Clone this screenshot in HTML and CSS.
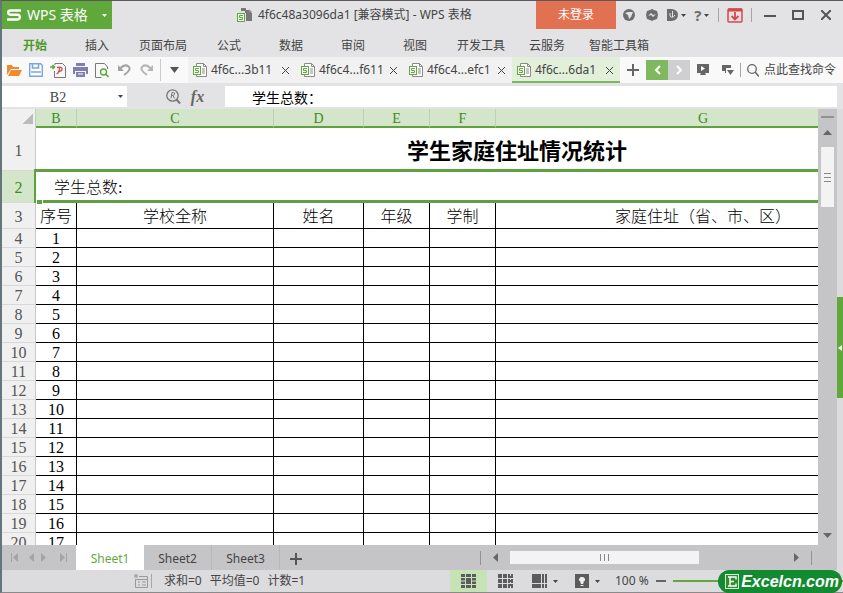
FILE: index.html
```html
<!DOCTYPE html>
<html lang="zh-CN">
<head>
    <meta charset="UTF-8">
    <title>4f6c48a3096da1 - WPS 表格</title>
    <link rel="stylesheet" href="styles.css">
</head>
<body>
<!-- 公用图标 -->
<svg class="defs">
    <symbol id="doc" viewBox="0 0 14 14">
        <path d="M3.500 3V.5h7l3 3v10h-10V11" fill="#fff" stroke="#8a8a8a"/>
        <path d="M10.500 .5v3h3M9 6h3M9 8h3M9 10h3" fill="none" stroke="#8a8a8a"/>
        <rect x=".5" y="3.500" width="7" height="8" fill="#fff" stroke="#5fa83c"/>
        <path d="M6 5.500H2.500v2h3v2H2" fill="none" stroke="#5fa83c"/>
    </symbol>
    <symbol id="close" viewBox="0 0 9 9">
        <path d="M1 1l7 7M8 1l-7 7" stroke="#444" fill="none"/>
    </symbol>
    <symbol id="caret" viewBox="0 0 5 3">
        <path d="M0 0h5L2.500 3z" fill="currentColor"/>
    </symbol>
</svg>
<div id="titlebar">
    <button class="brand">
        <svg width="14" height="12" viewBox="0 0 14 12"><path d="M14 1.500H3.500Q1.200 1.500 1.200 3.500T3.500 5.800H10.500Q12.800 5.800 12.800 8.100T10.500 10.500H0" fill="none" stroke="#fff" stroke-width="2.400"/></svg>
        <span>WPS 表格</span>
        <svg class="caret" width="5" height="3"><use href="#caret"/></svg>
    </button>
    <div class="caption">
        <svg width="15" height="14" viewBox="0 0 15 14"><path d="M4 0h5v3H4z" fill="#777"/><path d="M8 2h4l3 3v8H9V5H8z" fill="#777"/><path d="M12 1l3 3h-3z" fill="#999"/><rect x=".5" y="5.500" width="7" height="8" fill="#eef5ea" stroke="#5fa83c"/><path d="M6 7.500H2.500v2h3v2H2" fill="none" stroke="#5fa83c"/></svg>
        <span>4f6c48a3096da1 [兼容模式] - WPS 表格</span>
    </div>
    <button class="login">未登录</button>
    <div class="wintools">
        <button aria-label="皮肤"><svg width="12" height="12" viewBox="0 0 12 12"><circle cx="6" cy="6" r="6" fill="#6d6d6d"/><path d="M2 4l3-1 5 0-2 5-2 2-1-4z" fill="#e3e3e5"/></svg></button>
        <button aria-label="云同步"><svg width="12" height="12" viewBox="0 0 12 12"><path d="M6 0l2 1 3 1 1 4-1 4-3 1-2 1-2-1-3-1-1-4 1-4 3-1z" fill="#6d6d6d"/><path d="M2 7l3-3 2 2 3-1-3 3-2-2z" fill="#e3e3e5"/></svg></button>
        <button aria-label="论坛"><svg width="11" height="12" viewBox="0 0 11 12"><path d="M0 0h5q6 1 6 6t-6 6H0z" fill="#6d6d6d"/><path d="M3 4v3q2.500 3 5-1M5.500 2v6" fill="none" stroke="#e3e3e5"/></svg><svg class="caret" width="5" height="3"><use href="#caret"/></svg></button>
        <button aria-label="帮助"><b>?</b><svg class="caret" width="5" height="3"><use href="#caret"/></svg></button>
        <i class="sep"></i>
        <button class="down" aria-label="功能区"><svg width="16" height="15" viewBox="0 0 16 15"><rect x="1" y="1" width="14" height="13" rx="1" fill="#f1dede" stroke="#cf4a50" stroke-width="1.500"/><path d="M1 2h14" stroke="#cf4a50" stroke-width="3"/><path d="M8 4v7M4.500 8L8 11.500 11.500 8" fill="none" stroke="#cf4a50" stroke-width="1.800"/></svg></button>
        <i class="sep"></i>
        <button class="win" aria-label="最小化"><svg width="12" height="10"><path d="M0 6h12" stroke="#555" stroke-width="2"/></svg></button>
        <button class="win" aria-label="最大化"><svg width="12" height="10"><rect x="1" y="1" width="10" height="8" fill="none" stroke="#555" stroke-width="2"/></svg></button>
        <button class="win" aria-label="关闭"><svg width="10" height="10"><path d="M0 0l10 10M10 0L0 10" stroke="#555" stroke-width="2"/></svg></button>
    </div>
</div>

<nav id="menu">
    <a href="#" class="on">开始</a>
    <a href="#">插入</a>
    <a href="#">页面布局</a>
    <a href="#">公式</a>
    <a href="#">数据</a>
    <a href="#">审阅</a>
    <a href="#">视图</a>
    <a href="#">开发工具</a>
    <a href="#">云服务</a>
    <a href="#">智能工具箱</a>
</nav>

<div id="toolbar">
    <div class="quick">
        <button aria-label="打开"><svg width="15" height="12" viewBox="0 0 15 12"><path d="M0 11V1h5l1 2h6v2H4z" fill="#f08a2c"/><path d="M4 6h11l-3 6H1z" fill="#f08a2c"/></svg></button>
        <button aria-label="保存"><svg width="14" height="14" viewBox="0 0 14 14"><path d="M.7 .7h11l1.600 1.600v11H.7z" fill="#fff" stroke="#7aa5e3" stroke-width="1.400"/><path d="M3.500 1v4h6V1M2 9h10" fill="none" stroke="#7aa5e3" stroke-width="1.600"/></svg></button>
        <button aria-label="输出为PDF"><svg width="16" height="15" viewBox="0 0 16 15"><path d="M5 2V.5h7.500l3 3v11H4.500V8" fill="none" stroke="#777"/><path d="M0 4h4M2.500 2l2 2-2 2" fill="none" stroke="#5fa83c" stroke-width="1.600"/><path d="M7 4.500q5-1 5 1.500T8 8.500M9.500 5q0 5-3 6" fill="none" stroke="#d0494b" stroke-width="1.300"/></svg></button>
        <button aria-label="打印"><svg width="15" height="14" viewBox="0 0 15 14"><path d="M3 0h9v3H3zM0 4h15v7h-2V8H2v3H0zM3 9h9v5H3z" fill="#7e7eb5"/><path d="M5 11h5" stroke="#fff"/></svg></button>
        <button aria-label="打印预览"><svg width="14" height="15" viewBox="0 0 14 15"><path d="M12.500 6V4l-3-3.500h-9v14h6" fill="none" stroke="#777"/><circle cx="8.500" cy="9" r="3" fill="none" stroke="#5fa83c" stroke-width="1.400"/><path d="M10.500 11l3 3" stroke="#5fa83c" stroke-width="1.600"/></svg></button>
        <button aria-label="撤销"><svg width="13" height="12" viewBox="0 0 13 12"><path d="M2 4.500Q7-.5 10.500 2.500T6 11" fill="none" stroke="#a3a3a3" stroke-width="2"/><path d="M0 1v6h6z" fill="#a3a3a3"/></svg></button>
        <button aria-label="恢复"><svg width="13" height="12" viewBox="0 0 13 12"><path d="M11 4.500Q6-.5 2.500 2.500T7 11" fill="none" stroke="#b5b5b5" stroke-width="2"/><path d="M13 1v6H7z" fill="#b5b5b5"/></svg></button>
        <i class="sep"></i>
        <button class="more" aria-label="更多"><svg width="9" height="6" viewBox="0 0 9 6"><path d="M0 0h9L4.500 6z" fill="#555"/></svg></button>
    </div>
    <div class="files">
        <div class="file"><svg width="14" height="14"><use href="#doc"/></svg><span>4f6c...3b11</span><svg width="9" height="9"><use href="#close"/></svg></div>
        <div class="file"><svg width="14" height="14"><use href="#doc"/></svg><span>4f6c4...f611</span><svg width="9" height="9"><use href="#close"/></svg></div>
        <div class="file"><svg width="14" height="14"><use href="#doc"/></svg><span>4f6c4...efc1</span><svg width="9" height="9"><use href="#close"/></svg></div>
        <div class="file on"><svg width="14" height="14"><use href="#doc"/></svg><span>4f6c...6da1</span><svg width="9" height="9"><use href="#close"/></svg></div>
    </div>
    <button class="add" aria-label="新建"><svg width="12" height="12"><path d="M0 6h12M6 0v12" stroke="#666" stroke-width="2"/></svg></button>
    <button class="prev" aria-label="上一个"><svg width="7" height="10"><path d="M6 1L2 5l4 4" fill="none" stroke="#fff" stroke-width="2"/></svg></button>
    <button class="next" aria-label="下一个"><svg width="7" height="10"><path d="M1 1l4 4-4 4" fill="none" stroke="#fff" stroke-width="2"/></svg></button>
    <button class="tool" aria-label="播放"><svg width="12" height="12" viewBox="0 0 12 12"><path d="M0 0h12v9H8l1 2H3l1-2H0z" fill="#666"/><path d="M4 2l4 2.500L4 7z" fill="#fff"/></svg></button>
    <button class="tool" aria-label="选项"><svg width="12" height="12" viewBox="0 0 12 12"><path d="M0 1h9v3H4v5H3V7H0zM5 6h7L8.500 11z" fill="#666"/></svg></button>
    <i class="sep"></i>
    <button class="search"><svg width="12" height="13" viewBox="0 0 12 13"><circle cx="5" cy="5" r="4.300" fill="none" stroke="#666" stroke-width="1.300"/><path d="M8 8l4 4.500" stroke="#666" stroke-width="1.600"/></svg><span>点此查找命令</span></button>
</div>

<div id="formula">
    <div class="namebox">
        <input type="text" value="B2" aria-label="名称框">
        <svg class="caret" width="5" height="3"><use href="#caret"/></svg>
    </div>
    <div class="fx">
        <svg width="15" height="15" viewBox="0 0 15 15"><circle cx="6.500" cy="6.500" r="5.700" fill="none" stroke="#777" stroke-width="1.300"/><path d="M5 9.500l1-6h1.500q1.500.2 1 1.700T6 6.500M7 6.500l1.500 3" fill="none" stroke="#777"/><path d="M10.500 10.500l3.500 4" stroke="#777" stroke-width="2"/></svg>
        <i>fx</i>
    </div>
    <input class="content" type="text" value="学生总数：" aria-label="编辑栏">
</div>

<div id="main">
    <div class="book">
        <div class="view">
            <div class="cells">
                <table>
                    <colgroup>
                        <col class="num"><col class="b"><col class="c"><col class="d"><col class="e"><col class="e"><col class="g"><col class="h">
                    </colgroup>
                    <thead>
                    <tr><th class="corner"></th><th>B</th><th>C</th><th>D</th><th>E</th><th>F</th><th>G</th><th></th></tr>
                    </thead>
                    <tbody id="rows">
                    <tr class="r1"><th>1</th><td colspan="7">学生家庭住址情况统计</td></tr>
                    <tr class="r2"><th>2</th><td colspan="7">学生总数:<i></i></td></tr>
                    <tr class="r3"><th>3</th><td>序号</td><td>学校全称</td><td>姓名</td><td>年级</td><td>学制</td><td>家庭住址（省、市、区）</td><td></td></tr>
                    </tbody>
                </table>
            </div>
            <div class="vbar">
                <i class="split"></i>
                <svg width="9" height="5"><path d="M0 5h9L4.500 0z" fill="#666"/></svg>
                <div class="thumb"><i></i><i></i><i></i></div>
                <svg class="end" width="9" height="5"><path d="M0 0h9L4.500 5z" fill="#666"/></svg>
            </div>
        </div>
        <div class="sheets">
            <div class="nav">
                <svg width="58" height="9" viewBox="0 0 58 9"><path d="M1 0h1v9H1zM8 0v9L3 4.500zM24 0v9l-5-4.500zM31 0v9l5-4.500zM50 0v9l5-4.500zM56 0h1v9h-1z" fill="#a3a3a8"/></svg>
            </div>
            <button class="on">Sheet1</button>
            <button>Sheet2</button>
            <button>Sheet3</button>
            <button class="plus" aria-label="新建工作表"><svg width="12" height="12"><path d="M0 6h12M6 0v12" stroke="#555" stroke-width="2"/></svg></button>
            <div class="hbar">
                <i class="sep"></i>
                <svg width="5" height="9"><path d="M5 0v9L0 4.500z" fill="#666"/></svg>
                <div class="track"><div class="thumb"><i></i><i></i><i></i></div></div>
                <svg width="5" height="9"><path d="M0 0v9l5-4.500z" fill="#666"/></svg>
                <i class="sep"></i>
            </div>
        </div>
    </div>
    <div class="side">
        <button aria-label="展开任务窗格"><svg width="4" height="6"><path d="M4 0v6L0 3z" fill="#fff"/></svg></button>
    </div>
</div>

<div id="status">
    <svg class="note" width="14" height="14" viewBox="0 0 14 14"><circle cx="2" cy="2" r="2" fill="#aaa"/><path d="M5 2.500h8.500v11h-12V5M1.500 5.500h12M4 8h2M8 8h4M4 11h2M8 11h4" fill="none" stroke="#999"/></svg>
    <i class="sep"></i>
    <div class="sum"><span>求和=0</span><span>平均值=0</span><span>计数=1</span></div>
    <div class="modes">
        <button class="on" aria-label="普通视图"><svg width="15" height="14" viewBox="0 0 15 14"><path d="M0 0h15v14H0z" fill="#5c5c5c"/><path d="M4.500 0v14M10.500 0v14M0 3.500h15M0 10.500h15" stroke="#c8e6b8"/><path d="M0 7h4M11 7h4" stroke="#c8e6b8"/></svg></button>
        <button aria-label="分页预览"><svg width="15" height="14" viewBox="0 0 15 14"><path d="M0 0h15v14H0z" fill="#5c5c5c"/><path d="M4.500 0v14M9.500 0v14M0 4.500h15M0 9.500h15" stroke="#dcdcde"/><path d="M12.500 0v14" stroke="#dcdcde" stroke-dasharray="2 2"/></svg></button>
        <button aria-label="阅读模式"><svg width="15" height="14" viewBox="0 0 15 14"><path d="M0 0h9v9H0zM10 0h5v9h-5zM0 10h9v4H0zM10 10h5v4h-5z" fill="#5c5c5c"/><path d="M12.500 0v14M10 9.500h5" stroke="#dcdcde"/></svg><svg class="caret" width="5" height="3"><use href="#caret"/></svg></button>
        <button aria-label="护眼模式"><svg width="14" height="14" viewBox="0 0 14 14"><path d="M0 0h14v14H0z" fill="#5c5c5c"/><path d="M7 3.500a2 2 0 0 1 1 4v2H6v-2a2 2 0 0 1 1-4M5.500 11.500h3" fill="#eee" stroke="#eee"/></svg><svg class="caret" width="5" height="3"><use href="#caret"/></svg></button>
    </div>
    <div class="zoom">
        <label for="scale">100 %</label>
        <button aria-label="缩小"><svg width="10" height="2"><path d="M0 1h10" stroke="#666" stroke-width="2"/></svg></button>
        <input id="scale" type="range" min="10" max="200" value="100">
    </div>
</div>
<div id="logo">
    <svg width="14" height="15" viewBox="0 0 14 15"><rect x=".5" y=".5" width="13" height="14" fill="#2f8f2c" stroke="#d9eed2"/><path d="M3 3h8v2.500M3 12h8V9.500M5 3v9M5 7.500h4" fill="none" stroke="#fff" stroke-width="1.400"/></svg>
    <span>Excelcn.com</span>
</div>
<script>
    //生成序号行
    var rows = document.getElementById('rows');
    for (var i = 1; i <= 17; i++) {
        var tr = document.createElement('tr');
        tr.innerHTML = '<th>' + (i + 3) + '</th><td>' + i + '</td><td></td><td></td><td></td><td></td><td></td><td></td>';
        rows.appendChild(tr);
    }
</script>
</body>
</html>
```
FILE: styles.css
```css
*{
    padding: 0;
    margin: 0;
    box-sizing: border-box;
}
body{
    height: 100vh;
    display: flex;
    flex-direction: column;
    overflow: hidden;
    border-top: 1px solid #5c5759;
    border-bottom: 1px solid #8a8a8a;
    border-left: 2px solid #66757c;
    background: #e3e3e5;
    color: #444;
    font: 12px/16px "Noto Sans", "Noto Sans CJK SC", sans-serif;
}
button, input{
    font: inherit;
    color: inherit;
    border: 0;
    background: none;
}
button{
    display: flex;
    align-items: center;
    justify-content: center;
}
a{
    color: inherit;
    text-decoration: none;
}
svg{
    display: block;
    flex: none;
}
.defs{
    position: absolute;
    width: 0;
    height: 0;
}
.sep{
    width: 1px;
    height: 14px;
    background: #a5a5a8;
    flex: none;
}
/*标题栏*/
#titlebar{
    display: flex;
    height: 28px;
    flex: none;
}
.brand{
    width: 110px;
    height: 28px;
    padding: 0 5px;
    gap: 6px;
    justify-content: flex-start;
    background: #5fa83c;
    color: #fff;
    font-size: 14px;
}
.brand .caret{
    margin-left: auto;
}
.caption{
    display: flex;
    flex: 1;
    align-items: center;
    gap: 6px;
    padding-left: 125px;
    white-space: nowrap;
}
.login{
    width: 80px;
    height: 28px;
    background: #e27152;
    color: #fff;
}
.wintools{
    display: flex;
    align-items: center;
    justify-content: space-between;
    width: 227px;
    padding: 0 7px 0 5px;
}
.wintools button{
    gap: 3px;
    min-width: 15px;
}
.wintools b{
    font-size: 15px;
    color: #6d6d6d;
}
.wintools .win{
    width: 20px;
}
/*菜单*/
#menu{
    display: flex;
    align-items: center;
    height: 28px;
    padding: 6px 2px 0;
    flex: none;
}
#menu a{
    min-width: 62px;
    padding: 0 11px;
    text-align: center;
    white-space: nowrap;
}
#menu .on{
    color: #4b9a25;
    font-weight: bold;
}
/*工具栏*/
#toolbar{
    display: flex;
    align-items: center;
    height: 26px;
    background: #f9f9fa;
    flex: none;
}
.quick{
    display: flex;
    align-items: center;
    padding-left: 1px;
}
.quick button{
    width: 22px;
    height: 24px;
}
.quick .sep{
    height: 22px;
    margin-left: 3px;
    background: #ccc;
}
.quick .more{
    width: 27px;
}
.files{
    display: flex;
    height: 26px;
}
.file{
    display: flex;
    align-items: center;
    gap: 4px;
    width: 108px;
    padding: 0 6px 0 5px;
    background: #f1f1f2;
    white-space: nowrap;
}
.file span{
    flex: 1;
}
.file.on{
    background: linear-gradient(#7ab85c, #7ab85c) bottom / 100% 2px no-repeat #e2efda;
}
.add{
    width: 26px;
}
.prev, .next{
    width: 22px;
    height: 20px;
    background: #7fb95f;
}
.next{
    background: #cfcfd1;
}
.tool{
    width: 25px;
}
.search{
    gap: 5px;
    padding: 0 6px;
    flex: 1;
    justify-content: flex-start;
    white-space: nowrap;
}
/*编辑栏*/
#formula{
    display: flex;
    height: 26px;
    padding: 3px 6px 2px 0;
    flex: none;
}
.namebox{
    display: flex;
    align-items: center;
    width: 125px;
    padding-right: 4px;
    background: #fff;
}
.namebox input{
    width: 112px;
    padding-top: 2px;
    text-align: center;
    font: 14px/18px "Liberation Serif", serif;
    margin-right: auto;
}
.fx{
    display: flex;
    align-items: center;
    justify-content: center;
    gap: 10px;
    width: 98px;
    padding-left: 18px;
}
.fx i{
    font: italic bold 16px/20px "Liberation Serif", serif;
    color: #666;
}
.content{
    flex: 1;
    min-width: 0;
    padding-left: 27px;
    background: #fff;
    color: #000;
    font: 14px/20px "Noto Sans CJK SC", sans-serif;
}
/*表格区*/
#main{
    display: flex;
    flex: 1;
    min-height: 0;
}
.book{
    display: flex;
    flex-direction: column;
    flex: 1;
    min-width: 0;
}
.view{
    display: flex;
    flex: 1;
    min-height: 0;
}
.cells{
    flex: 1;
    min-width: 0;
    overflow: hidden;
    background: #fff;
}
table{
    width: 996px;
    table-layout: fixed;
    border-spacing: 0;
    color: #000;
    font: 16px/16px "Liberation Serif", "Noto Sans CJK SC", serif;
}
.num{ width: 34px; }
.b{ width: 41px; }
.c{ width: 197px; }
.d{ width: 90px; }
.e{ width: 66px; }
.g{ width: 415px; }
.h{ width: 87px; }
td{
    height: 19px;
    padding-top: 2px;
    text-align: center;
    border-right: 1px solid #000;
    border-bottom: 1px solid #000;
    font-weight: 300;
    white-space: nowrap;
}
th{
    height: 19px;
    padding-top: 2px;
    font-weight: normal;
    color: #555;
    background: #f0f0f1;
    border-right: 1px solid #c8c8ca;
    border-bottom: 1px solid #d8d8da;
}
thead th{
    height: 19px;
    background: #d3e6ca;
    color: #3f8a1f;
    border-right: 1px solid #bcd2b2;
    border-bottom: 2px solid #5fa040;
    font: 14px/15px "Liberation Serif", serif;
}
thead .corner{
    background: linear-gradient(135deg, #f0f0f1 50%, #bbb 50%) 20px 4px / 11px 11px no-repeat #f0f0f1;
    border-bottom-color: #f0f0f1;
}
.r1 td{
    height: 43px;
    padding-top: 4px;
    border: 0;
    font-size: 22px;
    font-weight: bold;
}
.r1 th{
    padding-top: 4px;
}
.r2 th{
    background: #d3e6ca;
    color: #3f8a1f;
}
.r2 td{
    position: relative;
    height: 32px;
    padding-left: 18px;
    border: 0;
    text-align: left;
}
/*选中框*/
.r2 td::after{
    content: "";
    position: absolute;
    top: -2px;
    right: 0;
    bottom: 0;
    left: -2px;
    border: 3px solid #5fa040;
    border-left-width: 2px;
}
.r2 i{
    position: absolute;
    left: 0;
    bottom: -2px;
    width: 7px;
    height: 6px;
    background: #5fa040;
    border: 1px solid #fff;
    z-index: 1;
}
.r3 td{
    height: 26px;
}
/*滚动条*/
.vbar{
    display: flex;
    flex-direction: column;
    align-items: center;
    width: 19px;
    padding: 7px 0;
    gap: 12px;
    background: #c5c5c8;
}
.vbar .split{
    width: 13px;
    height: 2px;
    background: #929295;
}
.vbar .thumb{
    display: flex;
    flex-direction: column;
    align-items: center;
    justify-content: center;
    gap: 3px;
    width: 13px;
    height: 60px;
    background: #f3f3f4;
}
.vbar .thumb i{
    width: 7px;
    height: 1px;
    background: #888;
}
.vbar .end{
    margin-top: auto;
}
.side{
    width: 6px;
    padding-top: 188px;
    background: #dcdcde;
}
.side button{
    width: 6px;
    height: 101px;
    background: #5fa83c;
}
/*工作表标签*/
.sheets{
    display: flex;
    align-items: center;
    height: 25px;
    background: #c5c5c8;
    flex: none;
}
.nav{
    width: 74px;
    padding-left: 8px;
}
.sheets button{
    width: 68px;
    height: 25px;
    padding-top: 2px;
    border-right: 1px solid #b8b8bb;
}
.sheets .on{
    background: #fff;
    color: #5fa83c;
    border: 0;
}
.sheets .plus{
    width: 32px;
    border: 0;
}
.hbar{
    display: flex;
    align-items: center;
    gap: 12px;
    width: 357px;
    margin-left: auto;
    padding-right: 25px;
}
.hbar .sep{
    background: #929295;
}
.hbar .track{
    flex: 1;
}
.hbar .thumb{
    display: flex;
    align-items: center;
    justify-content: center;
    gap: 3px;
    width: 189px;
    height: 13px;
    background: #f3f3f4;
}
.hbar .thumb i{
    width: 1px;
    height: 7px;
    background: #888;
}
/*状态栏*/
#status{
    display: flex;
    align-items: center;
    height: 22px;
    padding-left: 132px;
    background: #dcdcde;
    flex: none;
}
.note{
    margin-right: 3px;
}
.sum{
    display: flex;
    gap: 8px;
    padding-left: 12px;
    white-space: nowrap;
}
.modes{
    display: flex;
    margin-left: auto;
}
.modes button{
    gap: 6px;
    width: 37px;
    height: 22px;
}
.modes button:nth-child(n+3){
    width: 42px;
}
.modes .on{
    background: #c5e3b5;
}
.zoom{
    display: flex;
    align-items: center;
    gap: 7px;
    width: 235px;
    padding-left: 7px;
    white-space: nowrap;
}
#scale{
    flex: 1;
    min-width: 0;
    height: 2px;
    appearance: none;
    background: #5fa83c;
}
#logo{
    position: absolute;
    right: 1px;
    bottom: 0;
    display: flex;
    align-items: center;
    gap: 2px;
    height: 23px;
    padding: 0 3px 0 7px;
    border-radius: 12px;
    background: #128a2f;
    color: #fff;
    font: italic bold 16px/20px "Liberation Sans", sans-serif;
}
```
